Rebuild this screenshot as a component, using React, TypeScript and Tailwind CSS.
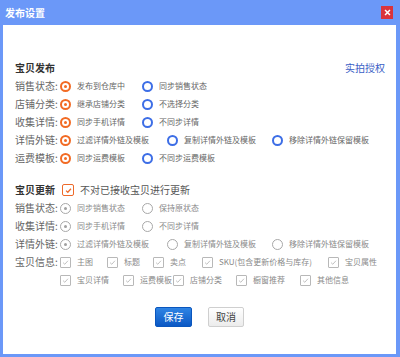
import React from 'react';

type RadioKind = 'on' | 'off' | 'disOn' | 'disOff';

const Radio: React.FC<{ kind: RadioKind }> = ({ kind }) => {
  if (kind === 'on') {
    return (
      <span className="w-[11px] h-[11px] rounded-full border-2 border-[#f26b24] flex items-center justify-center shrink-0">
        <span className="w-[3px] h-[3px] rounded-full bg-[#f26b24]" />
      </span>
    );
  }
  if (kind === 'off') {
    return <span className="w-[11px] h-[11px] rounded-full border-2 border-[#3d6ee6] shrink-0" />;
  }
  return (
    <span className="w-[11px] h-[11px] rounded-full border border-[#a8a8a8] flex items-center justify-center shrink-0">
      {kind === 'disOn' && <span className="w-[3px] h-[3px] rounded-full bg-[#a0a0a0]" />}
    </span>
  );
};

const Check: React.FC<{ active?: boolean }> = ({ active }) => (
  <span
    className={
      active
        ? 'w-[12px] h-[12px] rounded-[2px] border-[1.5px] border-[#ee6a2a] flex items-center justify-center shrink-0'
        : 'w-[11px] h-[11px] rounded-[1px] border border-[#b8b8b8] flex items-center justify-center shrink-0'
    }
  >
    <svg viewBox="0 0 10 10" className="w-[7px] h-[7px]">
      <path
        d="M1.5 5.2 L4 7.5 L8.5 2.5"
        fill="none"
        stroke={active ? '#ee6a2a' : '#b5b5b5'}
        strokeWidth={active ? 1.8 : 1.2}
      />
    </svg>
  </span>
);

const Label: React.FC<{ children: React.ReactNode }> = ({ children }) => (
  <span className="w-[45px] shrink-0 text-[10px] text-[#666] leading-none">{children}</span>
);

type Opt = { text: string; kind: RadioKind; w?: string };

const RadioRow: React.FC<{ label: string; opts: Opt[] }> = ({ label, opts }) => (
  <div className="flex items-center h-[18px]">
    <Label>{label}</Label>
    {opts.map((o) => (
      <div key={o.text} className={`flex items-center gap-[6px] ${o.w ?? ''}`}>
        <Radio kind={o.kind} />
        <span
          className={`text-[8px] leading-none whitespace-nowrap ${
            o.kind === 'disOn' || o.kind === 'disOff' ? 'text-[#8a8a8a]' : 'text-[#666]'
          }`}
        >
          {o.text}
        </span>
      </div>
    ))}
  </div>
);

const CheckItem: React.FC<{ text: string; w: string }> = ({ text, w }) => (
  <div className={`flex items-center gap-[6px] ${w}`}>
    <Check />
    <span className="text-[8px] leading-none text-[#8a8a8a] whitespace-nowrap">{text}</span>
  </div>
);

export default function App() {
  return (
    <div className="w-[400px] h-[357px] bg-[#6b98f8] flex flex-col font-['Noto_Sans_CJK_SC','Microsoft_YaHei',sans-serif]">
      {/* Title bar */}
      <div className="h-[25px] flex items-center justify-between pl-[5px] pr-[7px] shrink-0">
        <span className="text-[10px] font-bold text-white leading-none">发布设置</span>
        <span className="w-[12px] h-[13px] bg-[#d9333c] flex items-center justify-center">
          <svg viewBox="0 0 10 10" className="w-[7px] h-[7px]">
            <path d="M1.5 1.5 L8.5 8.5 M8.5 1.5 L1.5 8.5" stroke="#fff" strokeWidth="2.2" />
          </svg>
        </span>
      </div>

      {/* Body */}
      <div className="flex-1 bg-white ml-[3px] mr-[4px] mb-[3px] pt-[34px] pl-[12px] pr-[11px] flex flex-col">
        {/* 宝贝发布 */}
        <div className="flex items-center justify-between h-[18px]">
          <span className="text-[10px] font-bold text-[#333] leading-none">宝贝发布</span>
          <span className="text-[10px] text-[#3a5ec6] leading-none">实拍授权</span>
        </div>
        <RadioRow
          label="销售状态:"
          opts={[
            { text: '发布到仓库中', kind: 'on', w: 'w-[82px]' },
            { text: '同步销售状态', kind: 'off' },
          ]}
        />
        <RadioRow
          label="店铺分类:"
          opts={[
            { text: '继承店铺分类', kind: 'on', w: 'w-[82px]' },
            { text: '不选择分类', kind: 'off' },
          ]}
        />
        <RadioRow
          label="收集详情:"
          opts={[
            { text: '同步手机详情', kind: 'on', w: 'w-[82px]' },
            { text: '不同步详情', kind: 'off' },
          ]}
        />
        <RadioRow
          label="详情外链:"
          opts={[
            { text: '过滤详情外链及模板', kind: 'on', w: 'w-[107px]' },
            { text: '复制详情外链及模板', kind: 'off', w: 'w-[105px]' },
            { text: '移除详情外链保留模板', kind: 'off' },
          ]}
        />
        <RadioRow
          label="运费模板:"
          opts={[
            { text: '同步运费模板', kind: 'on', w: 'w-[82px]' },
            { text: '不同步运费模板', kind: 'off' },
          ]}
        />

        {/* 宝贝更新 */}
        <div className="flex items-center h-[18px] mt-[14px]">
          <span className="w-[47px] shrink-0 text-[10px] font-bold text-[#333] leading-none">宝贝更新</span>
          <div className="flex items-center gap-[6px]">
            <Check active />
            <span className="text-[10px] text-[#555] leading-none">不对已接收宝贝进行更新</span>
          </div>
        </div>
        <RadioRow
          label="销售状态:"
          opts={[
            { text: '同步销售状态', kind: 'disOn', w: 'w-[82px]' },
            { text: '保持原状态', kind: 'disOff' },
          ]}
        />
        <RadioRow
          label="收集详情:"
          opts={[
            { text: '同步手机详情', kind: 'disOn', w: 'w-[82px]' },
            { text: '不同步详情', kind: 'disOff' },
          ]}
        />
        <RadioRow
          label="详情外链:"
          opts={[
            { text: '过滤详情外链及模板', kind: 'disOn', w: 'w-[107px]' },
            { text: '复制详情外链及模板', kind: 'disOff', w: 'w-[105px]' },
            { text: '移除详情外链保留模板', kind: 'disOff' },
          ]}
        />
        <div className="flex items-center h-[18px]">
          <Label>宝贝信息:</Label>
          <CheckItem text="主图" w="w-[47px]" />
          <CheckItem text="标题" w="w-[46px]" />
          <CheckItem text="卖点" w="w-[49px]" />
          <CheckItem text="SKU(包含更新价格与库存)" w="w-[126px]" />
          <CheckItem text="宝贝属性" w="" />
        </div>
        <div className="flex items-center h-[18px] pl-[45px]">
          <CheckItem text="宝贝详情" w="w-[63px]" />
          <CheckItem text="运费模板" w="w-[50px]" />
          <CheckItem text="店铺分类" w="w-[63px]" />
          <CheckItem text="橱窗推荐" w="w-[64px]" />
          <CheckItem text="其他信息" w="" />
        </div>

        {/* Buttons */}
        <div className="flex justify-center gap-4 mt-[18px] pr-[1px]">
          <button className="w-[37px] h-[20px] rounded-[2px] bg-gradient-to-b from-[#2f84e4] to-[#0a58c4] border border-[#0a56bd] text-white text-[10px] leading-none">
            保存
          </button>
          <button className="w-[36px] h-[20px] rounded-[2px] bg-gradient-to-b from-white to-[#ececec] border border-[#cfcfcf] text-[#444] text-[10px] leading-none">
            取消
          </button>
        </div>
      </div>
    </div>
  );
}
